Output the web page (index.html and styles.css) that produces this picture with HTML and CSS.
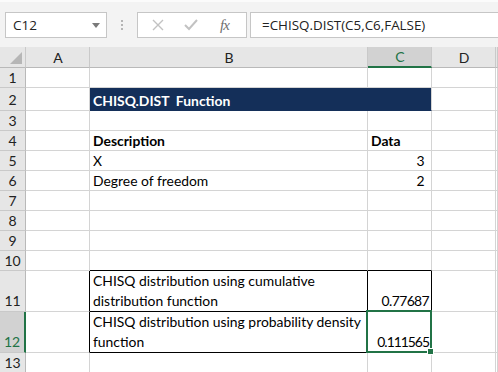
FILE: index.html
```html
<!DOCTYPE html>
<html lang="en">
<head>
    <meta charset="UTF-8">
    <meta name="viewport" content="width=device-width, initial-scale=1.0">
    <title>CHISQ.DIST Function</title>
    <link rel="stylesheet" href="styles.css">
</head>
<body>
    <div class="toolbar">
        <div class="name-box">
            <span>C12</span>
            <span class="caret"></span>
        </div>
        <div class="grip">
            <span></span><span></span><span></span>
        </div>
        <div class="fx-buttons">
            <svg class="btn-icon" width="12" height="12" viewBox="0 0 12 12">
                <path d="M1 1 L11 11 M11 1 L1 11" stroke="#c2c2c2" stroke-width="1.4" fill="none"/>
            </svg>
            <svg class="btn-icon" width="14" height="12" viewBox="0 0 14 12">
                <path d="M1 6 L5 10 L13 1" stroke="#c2c2c2" stroke-width="2" fill="none"/>
            </svg>
            <span class="fx">fx</span>
        </div>
        <div class="formula">=CHISQ.DIST(C5,C6,FALSE)</div>
    </div>

    <table class="sheet">
        <colgroup>
            <col class="w-head">
            <col class="w-a">
            <col class="w-b">
            <col class="w-c">
            <col class="w-d">
            <col class="w-e">
        </colgroup>
        <tr class="col-heads">
            <td class="corner"><span class="tri"></span></td>
            <td>A</td>
            <td>B</td>
            <td class="active-col">C</td>
            <td>D</td>
            <td></td>
        </tr>
        <tr><td class="row-head">1</td><td></td><td></td><td></td><td></td><td></td></tr>
        <tr class="tall">
            <td class="row-head">2</td><td></td>
            <td class="title" colspan="2">CHISQ.DIST&nbsp; Function</td>
            <td></td><td></td>
        </tr>
        <tr class="short"><td class="row-head">3</td><td></td><td></td><td></td><td></td><td></td></tr>
        <tr><td class="row-head">4</td><td></td><td class="bold">Description</td><td class="bold">Data</td><td></td><td></td></tr>
        <tr><td class="row-head">5</td><td></td><td>X</td><td class="num pad">3</td><td></td><td></td></tr>
        <tr><td class="row-head">6</td><td></td><td>Degree of freedom</td><td class="num pad">2</td><td></td><td></td></tr>
        <tr><td class="row-head">7</td><td></td><td></td><td></td><td></td><td></td></tr>
        <tr><td class="row-head">8</td><td></td><td></td><td></td><td></td><td></td></tr>
        <tr><td class="row-head">9</td><td></td><td></td><td></td><td></td><td></td></tr>
        <tr><td class="row-head">10</td><td></td><td class="box-top"></td><td class="box-top"></td><td></td><td></td></tr>
        <tr class="double">
            <td class="row-head">11</td><td class="box-left"></td>
            <td class="box wrap">CHISQ distribution using cumulative distribution function</td>
            <td class="box num">0.77687</td>
            <td></td><td></td>
        </tr>
        <tr class="double">
            <td class="row-head active-row">12</td><td class="box-left"></td>
            <td class="box wrap">CHISQ distribution using probability density function</td>
            <td class="box num selected">0.111565</td>
            <td></td><td></td>
        </tr>
        <tr><td class="row-head">13</td><td></td><td></td><td></td><td></td><td></td></tr>
        <tr><td class="row-head"></td><td></td><td></td><td></td><td></td><td></td></tr>
    </table>
</body>
</html>
```

FILE: styles.css
```css
body {
    margin: 0;
    padding: 0;
    width: 498px;
    height: 372px;
    overflow: hidden;
    background-color: #ffffff;
    font-family: Lato, "Liberation Sans", sans-serif;
}

.toolbar {
    height: 47px;
    box-sizing: border-box;
    padding-top: 10px;
    background-color: #f3f3f3;
    border-top: 2px solid #fbfbfb;
    display: flex;
    align-items: flex-start;
    font-family: "Open Sans", "Noto Sans", sans-serif;
}

.name-box {
    margin-left: 5px;
    width: 102px;
    height: 26px;
    box-sizing: border-box;
    background: #ffffff;
    border: 1px solid #c6c6c6;
    display: flex;
    align-items: center;
    justify-content: space-between;
    padding: 0 6px 0 7px;
    font-size: 13.5px;
    color: #222;
}

.caret {
    width: 0;
    height: 0;
    border-left: 4px solid transparent;
    border-right: 4px solid transparent;
    border-top: 5px solid #7a7a7a;
}

.grip {
    width: 30px;
    height: 26px;
    display: flex;
    flex-direction: column;
    align-items: center;
    justify-content: center;
    gap: 2px;
}

.grip span {
    width: 2px;
    height: 2px;
    background: #b5b5b5;
}

.fx-buttons {
    width: 110px;
    height: 26px;
    box-sizing: border-box;
    background: #ffffff;
    border: 1px solid #c6c6c6;
    display: flex;
    align-items: center;
    padding: 0 0 0 14px;
}

.btn-icon {
    margin-right: 20px;
}

.fx-buttons .btn-icon:nth-child(2) {
    margin-right: 22px;
}

.fx {
    font-family: "Liberation Serif", serif;
    font-style: italic;
    font-size: 15px;
    color: #6f6f6f;
    letter-spacing: -1px;
}

.formula {
    margin-left: 3px;
    flex: 1;
    height: 26px;
    box-sizing: border-box;
    background: #ffffff;
    border: 1px solid #c6c6c6;
    border-right: none;
    padding-left: 11px;
    line-height: 24px;
    font-size: 13.4px;
    color: #222;
}

/* grid */
.sheet {
    border-collapse: separate;
    border-spacing: 0;
    table-layout: fixed;
    width: 498px;
    font-size: 13.9px;
    color: #000;
}

.w-head { width: 26px; }
.w-a { width: 64px; }
.w-b { width: 278px; }
.w-c { width: 64px; }
.w-d { width: 64px; }
.w-e { width: 2px; }

.sheet td {
    box-sizing: border-box;
    height: 20px;
    padding: 0 2px 0 3px;
    border-right: 1px solid #d4d4d4;
    border-bottom: 1px solid #d4d4d4;
    vertical-align: bottom;
    line-height: 19px;
    white-space: nowrap;
    overflow: hidden;
}

.sheet tr.tall td { height: 23px; }
.sheet tr.short td { height: 19px; }
.sheet tr.double td { height: 40px; line-height: 20px; }

.col-heads td {
    background: #e6e6e6;
    text-align: center;
    vertical-align: middle;
    border-right-color: #c9c9c9;
    border-bottom-color: #b9b9b9;
    font-size: 14px;
    color: #222;
}

.corner {
    position: relative;
}

.tri {
    position: absolute;
    right: 3px;
    bottom: 3px;
    width: 0;
    height: 0;
    border-left: 12px solid transparent;
    border-bottom: 12px solid #b6b6b6;
}

.sheet td.row-head {
    background: #e6e6e6;
    text-align: center;
    vertical-align: middle;
    border-right-color: #b9b9b9;
    border-bottom-color: #c9c9c9;
    font-size: 14px;
    color: #222;
    padding: 0;
}

.sheet tr.double td.row-head {
    vertical-align: bottom;
}

.sheet td.active-col {
    background: #d2d2d2;
    color: #217346;
    border-bottom: 2px solid #217346;
}

.sheet td.active-row {
    background: #d2d2d2;
    color: #217346;
    border-right: 2px solid #217346;
}

.sheet td.title {
    background: #142f59;
    color: #ffffff;
    font-weight: bold;
    border-bottom-color: #142f59;
}

.bold {
    font-weight: bold;
}

.sheet td.num {
    text-align: right;
    padding-right: 2px;
    letter-spacing: -0.6px;
}

.sheet td.num.pad {
    padding-right: 7px;
}

.sheet td.box-top {
    border-bottom-color: #000;
}

.sheet td.box-left {
    border-right-color: #000;
}

.sheet td.box {
    border-right-color: #000;
    border-bottom-color: #000;
}

.sheet td.wrap {
    white-space: normal;
}

.sheet td.selected {
    position: relative;
    overflow: visible;
    letter-spacing: -1px;
}

.selected::after {
    content: "";
    position: absolute;
    left: -2px;
    top: -2px;
    right: -1px;
    bottom: -1px;
    border: 2px solid #217346;
}

.selected::before {
    content: "";
    position: absolute;
    right: -3px;
    bottom: -3px;
    width: 5px;
    height: 5px;
    background: #217346;
    border: 1px solid #ffffff;
    z-index: 1;
}
```
